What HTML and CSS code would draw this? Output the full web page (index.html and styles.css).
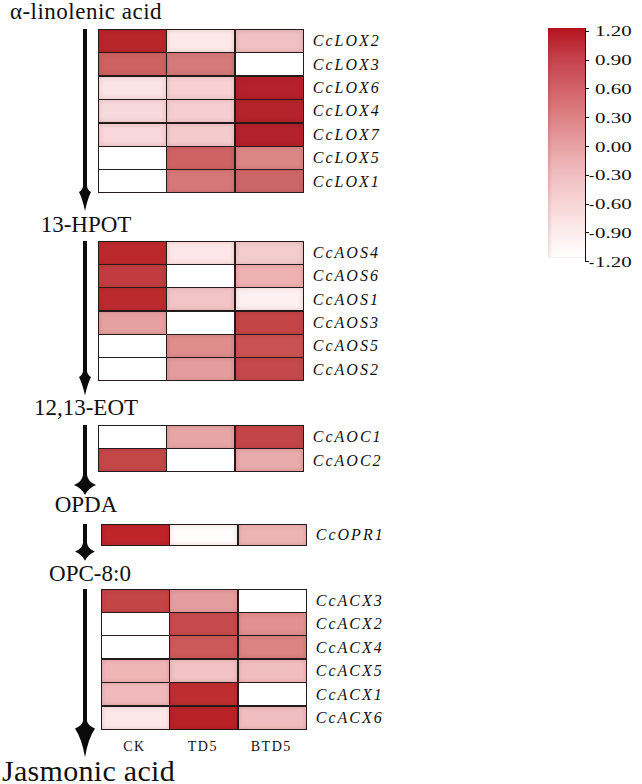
FILE: index.html
```html
<!DOCTYPE html>
<html lang="en">
<head>
<meta charset="utf-8">
<title>Jasmonic acid pathway heatmap</title>
<link rel="stylesheet" href="styles.css">
</head>
<body>
<div class="page">
  <div class="figure">
    <div class="step step--first">α-linolenic acid</div>
    <div class="block block--1">
      <svg class="arrow" width="98" height="182" viewBox="0 0 98 182"><path d="M83 0 H87 V157 Q87.5 161 91 163 Q87.5 170 85 182 Q82.5 170 79 163 Q82.5 161 83 157 Z"/></svg>
      <div class="hm">
        <div class="cell" style="background:#b8252b"></div><div class="cell" style="background:#fde9ea"></div><div class="cell" style="background:#f0c0c2"></div>
        <div class="cell" style="background:#cd6263"></div><div class="cell" style="background:#d47a7b"></div><div class="cell cell--blank"></div>
        <div class="cell" style="background:#fce3e5"></div><div class="cell" style="background:#f7d0d3"></div><div class="cell" style="background:#b4212a"></div>
        <div class="cell" style="background:#f8d9db"></div><div class="cell" style="background:#f5ced1"></div><div class="cell" style="background:#b5242a"></div>
        <div class="cell" style="background:#f8d6d9"></div><div class="cell" style="background:#f4cacd"></div><div class="cell" style="background:#b3212a"></div>
        <div class="cell cell--blank"></div><div class="cell" style="background:#cf6363"></div><div class="cell" style="background:#db8687"></div>
        <div class="cell cell--blank"></div><div class="cell" style="background:#d67879"></div><div class="cell" style="background:#cd6667"></div>
      </div>
      <div class="genes">
        <div class="gene">CcLOX2</div><div class="gene">CcLOX3</div><div class="gene">CcLOX6</div><div class="gene">CcLOX4</div><div class="gene">CcLOX7</div><div class="gene">CcLOX5</div><div class="gene">CcLOX1</div>
      </div>
    </div>

    <div class="step step--2">13-HPOT</div>
    <div class="block block--2">
      <svg class="arrow" width="98" height="154.5" viewBox="0 0 98 154.5"><path d="M83 0 H87 V130 Q87.5 134 91 136 Q87.5 143 85 154.5 Q82.5 143 79 136 Q82.5 134 83 130 Z"/></svg>
      <div class="hm">
        <div class="cell" style="background:#bc292d"></div><div class="cell" style="background:#fde6e7"></div><div class="cell" style="background:#f3cccd"></div>
        <div class="cell" style="background:#c23c3f"></div><div class="cell cell--blank"></div><div class="cell" style="background:#edb1b2"></div>
        <div class="cell" style="background:#bb2a2e"></div><div class="cell" style="background:#f2c4c5"></div><div class="cell" style="background:#fdf0f0"></div>
        <div class="cell" style="background:#e5a0a0"></div><div class="cell cell--blank"></div><div class="cell" style="background:#c54446"></div>
        <div class="cell cell--blank"></div><div class="cell" style="background:#df8d8d"></div><div class="cell" style="background:#cb5253"></div>
        <div class="cell cell--blank"></div><div class="cell" style="background:#e49d9d"></div><div class="cell" style="background:#c5494a"></div>
      </div>
      <div class="genes">
        <div class="gene">CcAOS4</div><div class="gene">CcAOS6</div><div class="gene">CcAOS1</div><div class="gene">CcAOS3</div><div class="gene">CcAOS5</div><div class="gene">CcAOS2</div>
      </div>
    </div>

    <div class="step step--3">12,13-EOT</div>
    <div class="block block--3">
      <svg class="arrow" width="98" height="70" viewBox="0 0 98 70"><path d="M83 0 H87 V50 Q88 57 96 60 Q88.5 63 85 70 Q81.5 63 74 60 Q82 57 83 50 Z"/></svg>
      <div class="hm">
        <div class="cell cell--blank"></div><div class="cell" style="background:#e7a6a6"></div><div class="cell" style="background:#c44547"></div>
        <div class="cell" style="background:#c44748"></div><div class="cell cell--blank"></div><div class="cell" style="background:#e9aaab"></div>
      </div>
      <div class="genes">
        <div class="gene">CcAOC1</div><div class="gene">CcAOC2</div>
      </div>
    </div>

    <div class="step step--4">OPDA</div>
    <div class="block block--4">
      <svg class="arrow" width="98" height="36.7" viewBox="0 0 98 36.7"><path d="M83 0 H87 V19 Q88 25 95 27.5 Q88 30.5 85 36.7 Q82 30.5 75 27.5 Q82 25 83 19 Z"/></svg>
      <div class="hm hm--thin hm--shift">
        <div class="cell" style="background:#bd2529"></div><div class="cell" style="background:#fffcfc"></div><div class="cell" style="background:#ebb5b6"></div>
      </div>
      <div class="genes genes--thin">
        <div class="gene">CcOPR1</div>
      </div>
    </div>

    <div class="step step--5">OPC-8:0</div>
    <div class="block block--5">
      <svg class="arrow" width="98" height="168.3" viewBox="0 0 98 168.3"><path d="M83 0 H87 V132 Q88 137 95 139.5 Q88 150 85 168.3 Q82 150 75 139.5 Q82 137 83 132 Z"/></svg>
      <div class="hm-wrap hm--shift">
        <div class="hm">
          <div class="cell" style="background:#c54547"></div><div class="cell" style="background:#e59e9e"></div><div class="cell cell--blank"></div>
          <div class="cell cell--blank"></div><div class="cell" style="background:#c64b4c"></div><div class="cell" style="background:#e19191"></div>
          <div class="cell cell--blank"></div><div class="cell" style="background:#cc5a5b"></div><div class="cell" style="background:#dc8383"></div>
          <div class="cell" style="background:#efb6b8"></div><div class="cell" style="background:#f2c2c4"></div><div class="cell" style="background:#f1bec0"></div>
          <div class="cell" style="background:#f0babc"></div><div class="cell" style="background:#be2e31"></div><div class="cell cell--blank"></div>
          <div class="cell" style="background:#fce8e9"></div><div class="cell" style="background:#b92226"></div><div class="cell" style="background:#f0bec0"></div>
        </div>
        <div class="cols">
          <div class="col">CK</div><div class="col">TD5</div><div class="col">BTD5</div>
        </div>
      </div>
      <div class="genes">
        <div class="gene">CcACX3</div><div class="gene">CcACX2</div><div class="gene">CcACX4</div><div class="gene">CcACX5</div><div class="gene">CcACX1</div><div class="gene">CcACX6</div>
      </div>
    </div>

    <div class="step step--last">Jasmonic acid</div>
  </div>

  <div class="legend">
    <div class="legend__bar"></div>
    <div class="legend__axis"></div>
    <div class="legend__ticks">
      <div class="tick"><span class="tick__sign"></span><span class="tick__num">1.20</span></div>
      <div class="tick"><span class="tick__sign"></span><span class="tick__num">0.90</span></div>
      <div class="tick"><span class="tick__sign"></span><span class="tick__num">0.60</span></div>
      <div class="tick"><span class="tick__sign"></span><span class="tick__num">0.30</span></div>
      <div class="tick"><span class="tick__sign"></span><span class="tick__num">0.00</span></div>
      <div class="tick"><span class="tick__sign">-</span><span class="tick__num">0.30</span></div>
      <div class="tick"><span class="tick__sign">-</span><span class="tick__num">0.60</span></div>
      <div class="tick"><span class="tick__sign">-</span><span class="tick__num">0.90</span></div>
      <div class="tick"><span class="tick__sign">-</span><span class="tick__num">1.20</span></div>
    </div>
  </div>
</div>
</body>
</html>
```

FILE: styles.css
```css
html, body {
  margin: 0;
  padding: 0;
  background: #ffffff;
  overflow: hidden;
}

.page {
  display: flex;
  align-items: flex-start;
  width: 642px;
  height: 784px;
  color: #111111;
  font-family: "Liberation Serif", "Times New Roman", serif;
}

.figure {
  flex: none;
  width: 548px;
  padding-top: 2px;
}

/* pathway step labels */
.step {
  width: 172px;
  text-align: center;
  white-space: nowrap;
  font-size: 23px;
  line-height: 20px;
  height: 20px;
}

.step--first {
  letter-spacing: 0.5px;
}

.step--2 { margin-top: 4px; }
.step--3 { margin-top: 3px; }
.step--4 { margin-top: 0; }
.step--5 { margin-top: 3px; padding-left: 8px; width: 164px; }

.step--last {
  width: auto;
  margin-top: 2px;
  padding-left: 2px;
  text-align: left;
  font-size: 30px;
  line-height: 24px;
  height: 24px;
  letter-spacing: 0.3px;
}

/* blocks */
.block {
  display: flex;
  align-items: flex-start;
}

.block--1 { margin-top: 7px; }
.block--2 { margin-top: 5.5px; }
.block--3 { margin-top: 7px; }
.block--4 { margin-top: 9px; }
.block--5 { margin-top: 5px; }

.arrow {
  flex: none;
  display: block;
  fill: #0b0b0b;
}

/* heatmap */
.hm {
  flex: none;
  display: grid;
  grid-template-columns: repeat(3, 67px);
  grid-auto-rows: 22px;
  gap: 1.4px;
  background: #241a1a;
  border: 1.3px solid #241a1a;
}

.hm--thin {
  grid-auto-rows: 20px;
}

.hm--shift {
  margin-left: 3px;
}

.hm-wrap {
  flex: none;
  display: flex;
  flex-direction: column;
}

.cell {
  background: #ffffff;
  box-shadow: inset 0 0 5px rgba(100, 10, 10, 0.16);
}

.cell--blank {
  background: #ffffff;
  box-shadow: none;
}

/* column labels */
.cols {
  display: grid;
  grid-template-columns: repeat(3, 67px);
  gap: 1.4px;
  margin-top: 9px;
  font-size: 14px;
  line-height: 16px;
  height: 16px;
  letter-spacing: 1.5px;
}

.col {
  text-align: center;
}

/* gene labels */
.genes {
  flex: none;
  display: flex;
  flex-direction: column;
  gap: 1.4px;
  margin-left: 9px;
  padding-top: 1.3px;
}

.gene {
  height: 22px;
  line-height: 22px;
  font-size: 16px;
  font-style: italic;
  letter-spacing: 2px;
  white-space: nowrap;
}

.genes--thin .gene {
  height: 20px;
  line-height: 20px;
}

/* legend */
.legend {
  flex: none;
  display: flex;
  align-items: flex-start;
  margin-top: 17px;
}

.legend__bar {
  flex: none;
  width: 37px;
  height: 230px;
  margin-top: 11px;
  background: linear-gradient(to bottom,
    #b5151f 0%,
    #c4404a 13%,
    #d3636a 27%,
    #de8588 40%,
    #e8a6a8 53%,
    #f1c2c4 66%,
    #f8dadb 79%,
    #fdeeee 90%,
    #ffffff 100%);
  box-shadow: inset 2px 0 3px rgba(120, 20, 20, 0.12);
}

.legend__axis {
  flex: none;
  width: 1px;
  height: 234px;
  margin-top: 11px;
  background: #111111;
}

.legend__ticks {
  display: flex;
  flex-direction: column;
  font-size: 15.5px;
}

.tick {
  height: 28.8px;
  display: flex;
  align-items: center;
  white-space: nowrap;
}

.tick::before {
  content: "";
  flex: none;
  width: 3px;
  height: 1px;
  background: #111111;
}

.tick__sign {
  flex: none;
  width: 6px;
}

.tick__num {
  display: inline-block;
  transform: scaleX(1.35);
  transform-origin: left center;
}
```
